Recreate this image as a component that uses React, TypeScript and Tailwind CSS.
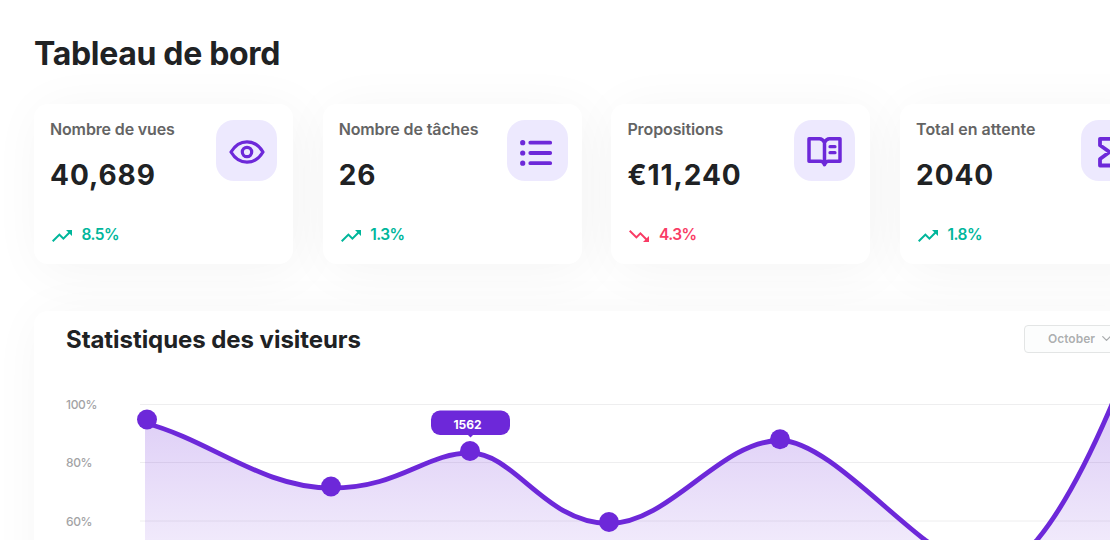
import type { ReactNode } from 'react';
import { MdTrendingDown, MdTrendingUp } from 'react-icons/md';
import { ChevronDown } from 'lucide-react';

interface Stat {
    label: string;
    value: string;
    change: string;
    up: boolean;
    icon: ReactNode;
    pad: string;
    labelClass: string;
}

const EyeIcon = () => (
    <svg width="61" height="61" viewBox="0 0 61 61" fill="none" stroke="#6d28d9" strokeWidth="3.2">
        <path d="M15 32C19 25.3 24.5 21.8 31 21.8s12 3.5 16 10.2c-4 6.7-9.5 10.2-16 10.2s-12-3.5-16-10.2z" strokeLinejoin="round" />
        <circle cx="31" cy="32" r="4.7" />
    </svg>
);

const ListIcon = () => (
    <svg width="61" height="61" viewBox="0 0 61 61" fill="none" stroke="#6d28d9" strokeWidth="3.8" strokeLinecap="round">
        <path d="M23.3 22.7h19.9M23.3 33h19.9M23.3 43.2h19.9" />
        <path d="M15.7 22.7h.01M15.7 33h.01M15.7 43.2h.01" strokeWidth="5.2" />
    </svg>
);

const BookIcon = () => (
    <svg width="61" height="61" viewBox="0 0 61 61" fill="none" stroke="#6d28d9" strokeWidth="3.5" strokeLinecap="round" strokeLinejoin="round">
        <path d="M30.5 22.5c-1-2-2.5-3.7-5-3.7H15v22.4h11.5c2 0 3.2 1.2 4 3.5.8-2.3 2-3.5 4-3.5H46V18.8H35.5c-2.5 0-4 1.7-5 3.7zM30.5 22.5V44" />
        <path d="M36 26.7h5M36 32.7h5" strokeWidth="3.2" />
    </svg>
);

const HourglassIcon = () => (
    <svg width="61" height="61" viewBox="0 0 61 61" fill="none" stroke="#6d28d9" strokeWidth="3.8" strokeLinejoin="round">
        <path d="M19 18.8h24v6.5L33.5 32l9.5 7v6.5H19V39l9.5-7-9.5-6.7z" />
    </svg>
);

const stats: Stat[] = [
    { label: 'Nombre de vues', value: '40,689', change: '8.5%', up: true, icon: <EyeIcon />, pad: 'pr-4', labelClass: 'tracking-[-0.14px]' },
    { label: 'Nombre de tâches', value: '26', change: '1.3%', up: true, icon: <ListIcon />, pad: 'pr-3.5', labelClass: 'tracking-[-0.12px]' },
    { label: 'Propositions', value: '€11,240', change: '4.3%', up: false, icon: <BookIcon />, pad: 'pr-[15px]', labelClass: 'tracking-[-0.1px]' },
    { label: 'Total en attente', value: '2040', change: '1.8%', up: true, icon: <HourglassIcon />, pad: 'pr-[17px]', labelClass: 'tracking-normal' },
];

const StatCard = ({ stat }: { stat: Stat }) => (
    <div className={`flex h-[159.5px] w-[259px] shrink-0 justify-between rounded-[14px] bg-white pt-4 pl-4 shadow-[6px_6px_54px_rgba(0,0,0,0.046)] ${stat.pad}`}>
        <div className="-mt-px flex flex-col whitespace-nowrap">
            <span className={`text-base leading-5 font-semibold text-[#646464] ${stat.labelClass}`}>{stat.label}</span>
            <span className="mt-[17px] text-[28px] leading-[38px] font-bold tracking-[0.95px] text-[#202224]">{stat.value}</span>
            <div className={`mt-[30px] flex items-center gap-[7.5px] font-semibold ${stat.up ? 'text-[#00b69b]' : 'text-[#f93c65]'}`}>
                {stat.up ? <MdTrendingUp size={24} /> : <MdTrendingDown size={24} />}
                <span className="-mt-0.5 text-[15.5px] leading-5 tracking-[-0.55px]">{stat.change}</span>
            </div>
        </div>
        <div className="-ml-8 h-[61px] w-[61px] shrink-0 rounded-[18px] bg-[#ede9fe]">{stat.icon}</div>
    </div>
);

const curve =
    'M145 423C210 440 262 488 331 488C400 488 425 453 470 453C515 453 545 523.5 609 523.5C670 523.5 720 440.5 780 440.5C820 440.5 878 504 925 540C970 572 1010 570 1037 540C1062 510 1088 460 1110 409L1130 362';

const points = [
    [147, 419.5],
    [331, 486.5],
    [470, 451],
    [609, 522],
    [780, 439.3],
];

const VisitorsChart = () => (
    <svg width="970" height="160" viewBox="140 380 970 160" className="shrink-0 overflow-visible">
        <defs>
            <linearGradient id="area" gradientUnits="userSpaceOnUse" x1="0" y1="400" x2="0" y2="640">
                <stop offset="0" stopColor="#6d28d9" stopOpacity="0.24" />
                <stop offset="1" stopColor="#6d28d9" stopOpacity="0" />
            </linearGradient>
        </defs>
        <path d="M140 404.5H1110M140 462.5H1110M140 521H1110" stroke="#eeeeef" />
        <path d={`${curve}V640H145z`} fill="url(#area)" />
        <path d={curve} fill="none" stroke="#6d28d9" strokeWidth="4.8" />
        {points.map(([x, y]) => (
            <circle key={x} cx={x} cy={y} r="10" fill="#6d28d9" />
        ))}
        <rect x="431" y="410.5" width="79" height="24.5" rx="9" fill="#6d28d9" />
        <path d="M467.5 434.5h6l-3 3z" fill="#6d28d9" />
        <text x="467.5" y="429.4" textAnchor="middle" fill="#fff" fontSize="12" fontWeight="700">
            1562
        </text>
    </svg>
);

const App = () => {
    return (
        <div className="flex h-[540px] w-[1110px] flex-col overflow-hidden bg-white pl-[34px] font-['Inter',sans-serif]">
            <h1 className="mt-[34px] text-[32px] leading-10 font-bold tracking-[-0.32px] text-[#202224]">Tableau de bord</h1>
            <div className="mt-[30px] flex shrink-0 gap-[29.7px]">
                {stats.map((stat) => (
                    <StatCard key={stat.label} stat={stat} />
                ))}
            </div>
            <div className="mt-[47.5px] h-[360px] w-[1125px] shrink-0 rounded-[14px] bg-white shadow-[6px_6px_54px_rgba(0,0,0,0.046)]">
                <div className="flex h-11 items-start justify-between pl-8">
                    <h2 className="mt-[13px] text-2xl leading-8 font-bold tracking-[-0.06px] text-[#202224]">Statistiques des visiteurs</h2>
                    <div className="mt-[13.5px] mr-8 flex h-[28px] w-[103px] items-center rounded border border-[#e3e5e5] bg-[#fcfdfd] pl-[23px] text-xs font-semibold text-[#2b303466]">
                        <span>October</span>
                        <ChevronDown size={15} className="ml-1" />
                    </div>
                </div>
                <div className="mt-[25px] flex">
                    <div className="flex w-[106px] shrink-0 flex-col pt-4 pl-8 text-xs font-medium tracking-[-0.35px] text-[#a3a3a5]">
                        <span className="h-[58.3px] leading-[18px]">100%</span>
                        <span className="h-[58.3px] leading-[18px]">80%</span>
                        <span className="h-[58.3px] leading-[18px]">60%</span>
                    </div>
                    <VisitorsChart />
                </div>
            </div>
        </div>
    );
};

export default App;
